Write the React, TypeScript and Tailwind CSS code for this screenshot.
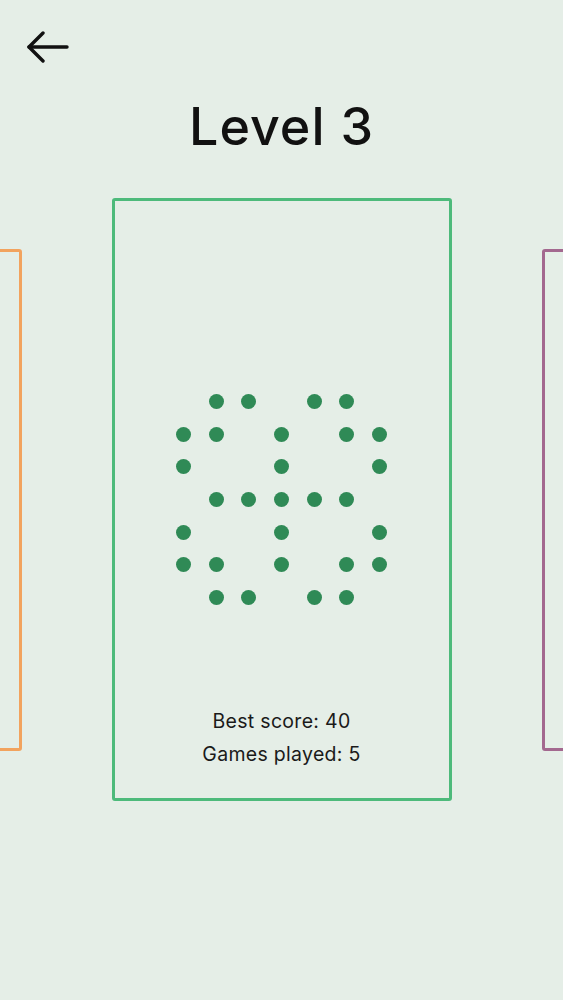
import React from 'react';

const PATTERN = [
  '.XX.XX.',
  'XX.X.XX',
  'X..X..X',
  '.XXXXX.',
  'X..X..X',
  'XX.X.XX',
  '.XX.XX.',
];

function DotGrid() {
  return (
    <div className="grid grid-cols-[repeat(7,32.6px)] grid-rows-[repeat(7,32.6px)]">
      {PATTERN.flatMap((row, r) =>
        row.split('').map((c, i) => (
          <div key={`${r}-${i}`} className="flex items-center justify-center">
            {c === 'X' && <div className="w-[15px] h-[15px] rounded-full bg-[#2f8a56]" />}
          </div>
        ))
      )}
    </div>
  );
}

export default function App() {
  return (
    <div
      className="w-full h-[1000px] bg-[#e5eee7] overflow-hidden flex flex-col text-[#111]"
      style={{ fontFamily: 'Inter, "Liberation Sans", Arial, sans-serif' }}
    >
      {/* Header */}
      <div className="h-[94px] pl-[26px] pt-[31px]">
        <button className="w-[44px] h-[32px] flex items-center">
          <svg width="44" height="32" viewBox="0 0 44 32" fill="none" stroke="#111" strokeWidth="3.4" strokeLinecap="round" strokeLinejoin="round">
            <path d="M3 16H41" />
            <path d="M17 2L3 16L17 30" />
          </svg>
        </button>
      </div>

      {/* Title */}
      <div className="h-[104px] flex justify-center pt-[7px]">
        <h1 className="text-[52px] leading-[52px] font-medium tracking-[1px]">Level 3</h1>
      </div>

      {/* Level carousel */}
      <div className="flex items-center justify-center gap-[90px]">
        <div className="shrink-0 w-[285px] h-[502px] border-[3px] border-[#f2a35e] rounded-[3px]" />

        <div className="shrink-0 w-[340px] h-[603px] border-[3px] border-[#4dba7b] rounded-[3px] grid grid-rows-[1fr_auto_1fr]">
          <div />
          <div className="flex justify-center">
            <DotGrid />
          </div>
          <div className="flex flex-col justify-end items-center pb-[27px] text-[19.5px] tracking-[0.3px] text-[#1a1a1a]">
            <p className="leading-[33px]">Best score: 40</p>
            <p className="leading-[33px]">Games played: 5</p>
          </div>
        </div>

        <div className="shrink-0 w-[285px] h-[502px] border-[3px] border-[#a3688f] rounded-[3px]" />
      </div>
    </div>
  );
}
